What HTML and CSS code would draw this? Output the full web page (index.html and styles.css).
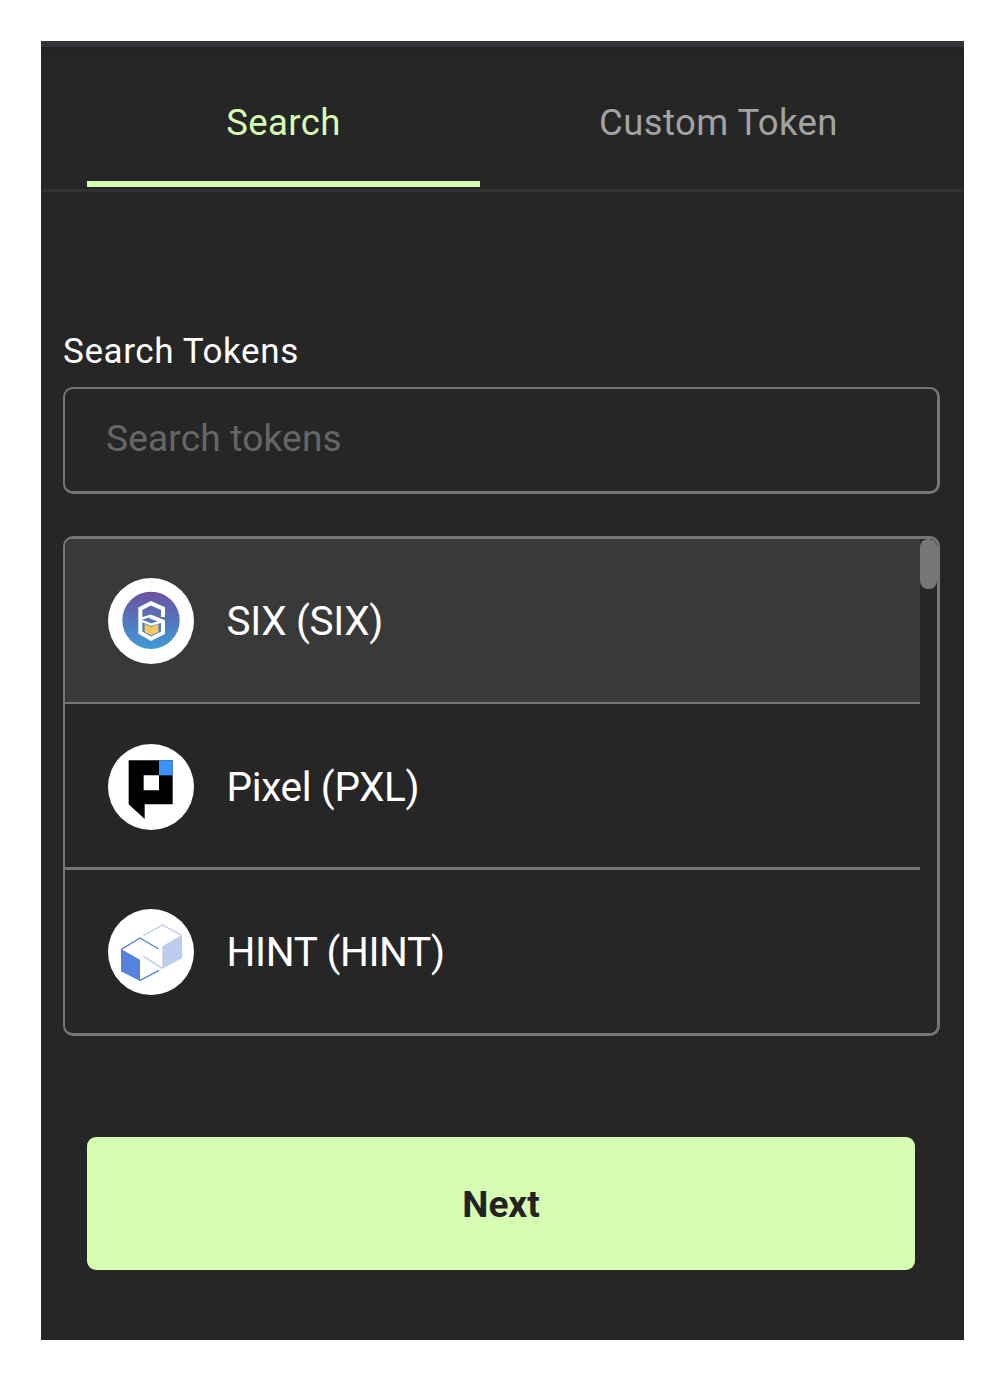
FILE: index.html
```html
<!DOCTYPE html>
<html lang="en">
<head>
<meta charset="utf-8">
<title>Import tokens</title>
<link rel="stylesheet" href="styles.css">
</head>
<body>
<main class="panel">
  <nav class="tabs">
    <a class="tab tab-active"><span>Search</span></a>
    <a class="tab"><span>Custom Token</span></a>
  </nav>
  <section class="content">
    <label class="label" for="search"><span>Search Tokens</span></label>
    <input class="search" id="search" type="text" placeholder="Search tokens">
    <div class="list">
      <ul class="rows">
        <li class="row row-selected">
          <svg class="icon" viewBox="24 26 258 258">
            <defs><linearGradient id="six" x1="0" y1="0" x2="0" y2="1"><stop offset="0" stop-color="#6b539f"/><stop offset="1" stop-color="#3d9bd7"/></linearGradient></defs>
            <circle cx="153" cy="155" r="129" fill="#fff"/>
            <circle cx="153" cy="153" r="86" fill="url(#six)"/>
            <path d="M134 164L154 173L175 164V188L154 198L134 188Z" fill="#fbc85f"/>
            <path d="M189 143V118L153 102L121 118V190L153 208L189 190V157L150 141" fill="none" stroke="#fff" stroke-width="12"/>
            <path d="M124 148L150 140L186 156L154 166L126 155" fill="none" stroke="#fff" stroke-width="7"/>
          </svg>
          <span class="name">SIX (SIX)</span>
        </li>
        <li class="row">
          <svg class="icon" viewBox="24 26 258 258">
            <circle cx="153" cy="155" r="129" fill="#fff"/>
            <path d="M86 75H218V207H134V251L86 207ZM131 120V165H177V120Z" fill="#000" fill-rule="evenodd"/>
            <path d="M177 75H218V120H177Z" fill="#3a92fc"/>
          </svg>
          <span class="name">Pixel (PXL)</span>
        </li>
        <li class="row">
          <svg class="icon" viewBox="24 26 258 258">
            <circle cx="153" cy="155" r="129" fill="#fff"/>
            <path d="M187 138L246 104V174L187 205Z" fill="#bccdef"/>
            <path d="M130 106L187 74L246 105M130 168L187 204" fill="none" stroke="#bccdef" stroke-width="4"/>
            <path d="M63 146L120 178V242L63 213Z" fill="#5482dc"/>
            <path d="M64 147L120 113L176 146M119 241L177 210" fill="none" stroke="#5482dc" stroke-width="4"/>
          </svg>
          <span class="name">HINT (HINT)</span>
        </li>
      </ul>
      <div class="scrollbar"><div class="thumb"></div></div>
    </div>
    <button class="next" type="button"><span>Next</span></button>
  </section>
</main>
</body>
</html>
```
FILE: styles.css
```css
* { box-sizing: border-box; }
body {
  margin: 0;
  padding: 41px 42px 42px 41px;
  background: #fff;
  font-family: Roboto, sans-serif;
}
.panel {
  height: 1299px;
  border-top: 6px solid #35363c;
  background: linear-gradient(#222220, #262626 14px);
}
.tabs {
  display: flex;
  height: 145px;
  padding: 0 46px;
  gap: 42px;
  border-bottom: 3px solid #323232;
}
.tab {
  width: 393px;
  height: 140px;
  padding-top: 54px;
  border-bottom: 6px solid transparent;
  color: #a3a3a3;
  font-size: 36.5px;
  line-height: 44px;
  letter-spacing: 0.4px;
  text-align: center;
}
.tab-active { border-bottom-color: #d6feb2; color: #d6feb2; }
.content {
  display: flex;
  flex-direction: column;
  padding: 139px 24px 0 22px;
}
.label {
  height: 56px;
  color: #fff;
  font-size: 35px;
  line-height: 42px;
  letter-spacing: 0.6px;
}
.search {
  height: 107px;
  padding: 0 41px 3px;
  border: solid #757575;
  border-width: 2px 3px 3px 2px;
  border-radius: 10px;
  background: none;
  color: #fff;
  font: 37px Roboto, sans-serif;
  letter-spacing: 0.2px;
}
.search::placeholder { color: #666; opacity: 1; }
.list {
  display: flex;
  height: 500px;
  margin-top: 42px;
  border: solid #757575;
  border-width: 3px 3px 3px 2px;
  border-radius: 10px;
  overflow: hidden;
}
.rows { flex: 1; margin: 0; padding: 0; list-style: none; }
.row {
  display: flex;
  align-items: center;
  gap: 32.5px;
  height: 163px;
  padding-left: 43px;
}
.row-selected {
  height: 165px;
  padding-top: 1px;
  border-bottom: 2px solid #757575;
  background: #393939;
}
.row:nth-child(2) { height: 166px; padding-top: 2px; border-bottom: 3px solid #757575; }
.icon { width: 86px; height: 86px; }
.name { color: #fff; font-size: 40.5px; line-height: 48px; letter-spacing: -0.35px; }
.scrollbar { width: 17px; }
.thumb { height: 50px; border-radius: 8px; background: #777; }
.next {
  height: 133px;
  margin: 101px 25px 0 24px;
  padding: 2px 0 0;
  border: 0;
  border-radius: 9px;
  background: #d6feb2;
  color: #222;
  font: bold 37px Roboto, sans-serif;
}
```
